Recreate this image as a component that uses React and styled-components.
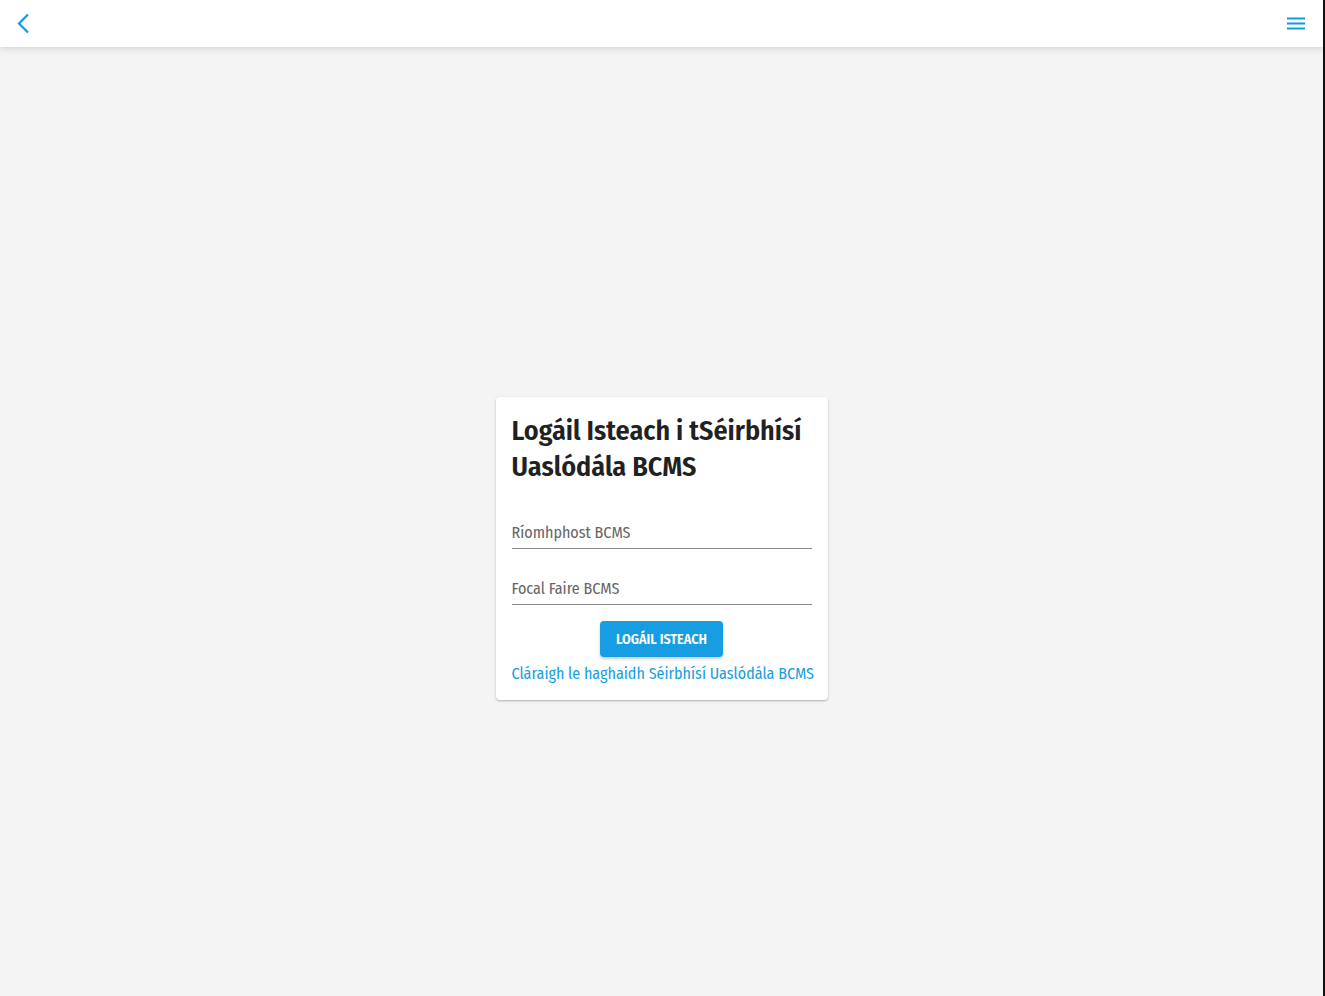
import React from 'react';
import styled, { createGlobalStyle } from 'styled-components';

const GlobalStyle = createGlobalStyle`
	html, body {
		margin: 0;
		padding: 0;
		background: #f4f4f4;
	}

	body {
		font-family: 'Fira Sans Condensed', 'Liberation Sans Narrow', 'Roboto Condensed', Roboto, sans-serif;
	}

	* {
		box-sizing: border-box;
	}
`;

const Page = styled.div`
	min-height: 996px;
	background: #f4f4f4;
	border-right: 2px solid #111;
	display: flex;
	flex-direction: column;
`;

const Header = styled.header`
	height: 47px;
	background: #fff;
	box-shadow: 0 2px 6px rgba(0, 0, 0, 0.12);
	display: flex;
	align-items: center;
	justify-content: space-between;
	padding: 0 18px 0 16px;
	position: relative;
	z-index: 1;
`;

const IconButton = styled.button`
	background: none;
	border: none;
	padding: 0;
	display: flex;
	align-items: center;
	justify-content: center;
	color: #139be0;
	cursor: pointer;
`;

const Main = styled.main`
	flex: 1;
	display: flex;
	justify-content: center;
	align-items: flex-start;
	padding-top: 350px;
`;

const Card = styled.div`
	width: 332px;
	background: #fff;
	border-radius: 4px;
	box-shadow: 0 1px 3px rgba(0, 0, 0, 0.2), 0 1px 1px rgba(0, 0, 0, 0.1);
	padding: 16px 16px 16px;
	display: flex;
	flex-direction: column;
`;

const Title = styled.h1`
	margin: 0;
	font-size: 28px;
	line-height: 36px;
	font-weight: 600;
	color: #212121;
`;

const Input = styled.input`
	display: block;
	width: 100%;
	margin-top: ${(p) => p.$gap}px;
	border: none;
	border-bottom: 1px solid #8a8a8a;
	background: transparent;
	padding: 0 0 6px;
	height: 27px;
	font-family: inherit;
	font-size: 16px;
	line-height: 20px;
	color: #212121;
	outline: none;

	&::placeholder {
		color: #666;
	}
`;

const Button = styled.button`
	align-self: center;
	margin-top: 16px;
	height: 36px;
	padding: 0 16px;
	background: #179de2;
	color: #fff;
	border: none;
	border-radius: 4px;
	font-family: inherit;
	font-size: 14px;
	font-weight: 600;
	text-transform: uppercase;
	box-shadow: 0 2px 3px rgba(0, 0, 0, 0.2);
	cursor: pointer;
`;

const RegisterLink = styled.a`
	display: block;
	margin-top: 7px;
	font-size: 16px;
	line-height: 20px;
	color: #179de2;
	text-decoration: none;
	white-space: nowrap;
`;

const App = () => {
	return (
		<>
			<GlobalStyle />
			<Page>
				<Header>
					<IconButton aria-label="back">
						<svg width="16" height="22" viewBox="0 0 16 22" fill="none">
							<polyline points="12,1.5 3,10.5 12,19.5" stroke="currentColor" strokeWidth="2.2" />
						</svg>
					</IconButton>
					<IconButton aria-label="menu">
						<svg width="18" height="14" viewBox="0 0 18 14" fill="currentColor">
							<rect x="0" y="0.5" width="18" height="2" />
							<rect x="0" y="5.5" width="18" height="2" />
							<rect x="0" y="10.5" width="18" height="2" />
						</svg>
					</IconButton>
				</Header>
				<Main>
					<Card>
						<Title>Logáil Isteach i tSéirbhísí Uaslódála BCMS</Title>
						<Input $gap={37} type="email" placeholder="Ríomhphost BCMS" />
						<Input $gap={29} type="password" placeholder="Focal Faire BCMS" />
						<Button>Logáil Isteach</Button>
						<RegisterLink href="#">Cláraigh le haghaidh Séirbhísí Uaslódála BCMS</RegisterLink>
					</Card>
				</Main>
			</Page>
		</>
	);
};

export default App;
